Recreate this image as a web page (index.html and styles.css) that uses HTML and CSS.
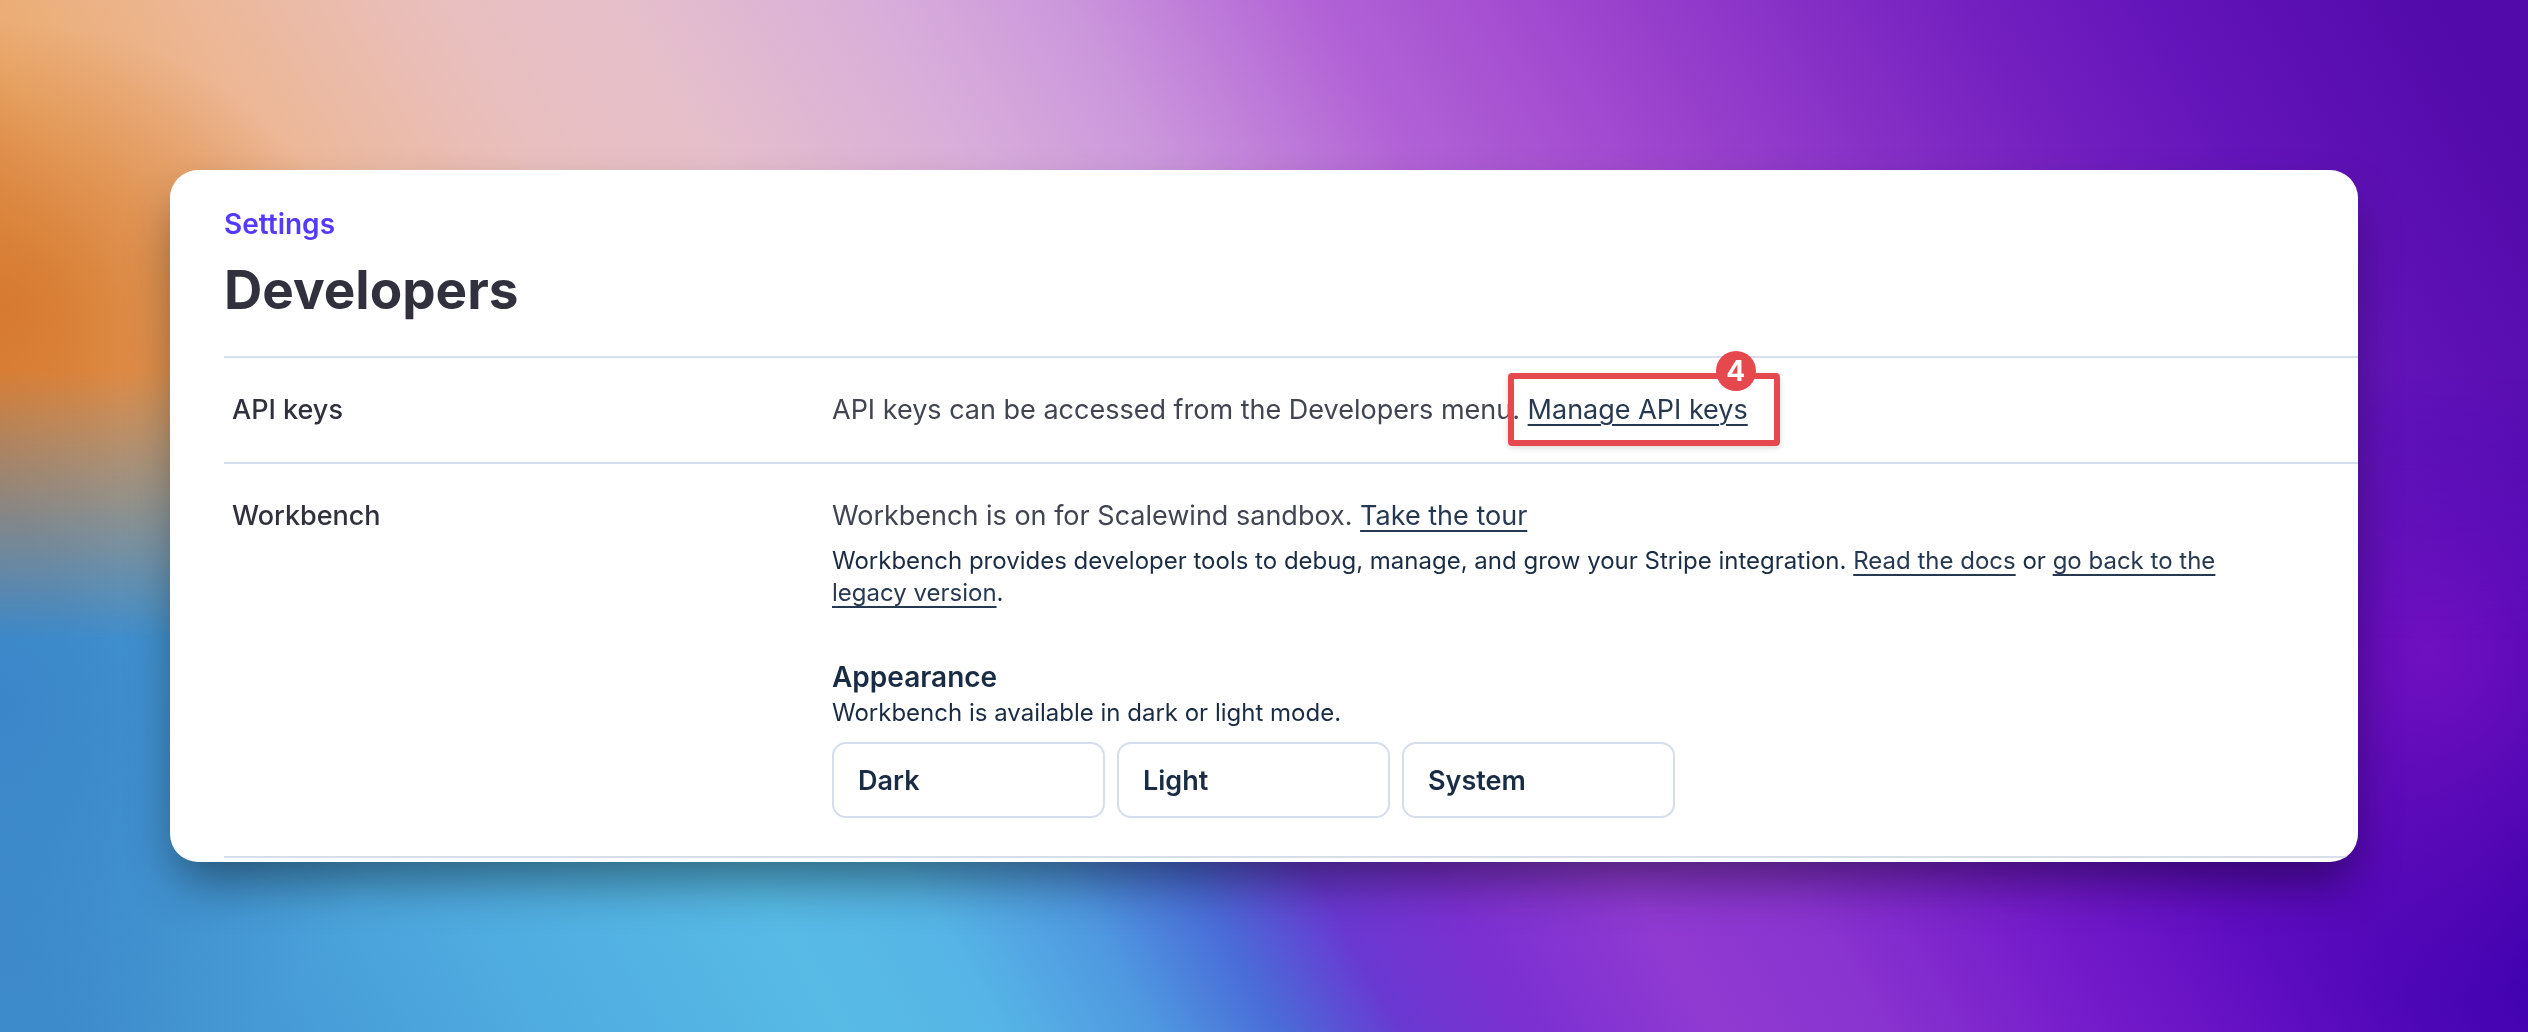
FILE: index.html
```html
<!DOCTYPE html>
<html lang="en">
<head>
  <meta charset="UTF-8" />
  <meta name="viewport" content="width=device-width, initial-scale=1.0" />
  <title>Developers</title>
  <link rel="stylesheet" href="styles.css">
</head>
<body>
  <main class="card">
    <header class="page-header">
      <a class="breadcrumb" href="#">Settings</a>
      <h1>Developers</h1>
    </header>

    <section class="row">
      <h2 class="row-label">API keys</h2>
      <div class="row-content">
        <p class="lead">API keys can be accessed from the Developers menu.
          <span class="callout"><a href="#">Manage API keys</a><span class="callout-box"><span class="callout-badge">4</span></span></span></p>
      </div>
    </section>

    <section class="row">
      <h2 class="row-label">Workbench</h2>
      <div class="row-content">
        <p class="lead">Workbench is on for Scalewind sandbox. <a href="#">Take the tour</a></p>
        <p class="note">Workbench provides developer tools to debug, manage, and grow your Stripe integration. <a href="#">Read the docs</a> or <a href="#">go back to the legacy version</a>.</p>

        <h3>Appearance</h3>
        <p class="note">Workbench is available in dark or light mode.</p>
        <div class="modes">
          <button type="button">Dark</button>
          <button type="button">Light</button>
          <button type="button">System</button>
        </div>
      </div>
    </section>
  </main>
</body>
</html>
```
FILE: styles.css
```css
* {
  box-sizing: border-box;
}

body {
  font-family: 'Inter', sans-serif;
  margin: 0;
  padding: 170px;
  min-height: 100vh;
  color: #30313d;
  background:
    radial-gradient(ellipse 12% 34% at 96% 63%, #7010c0 0%, rgba(112, 16, 192, 0) 100%),
    radial-gradient(ellipse 16% 40% at 0% 68%, #3b86c8 0%, rgba(59, 134, 200, 0) 100%),
    linear-gradient(60deg, #3f8ccc 2%, #469bd6 9%, #4fabe0 17%, #57bbe6 27%, #56b5e6 32%, #4f98e0 37%, #4a6cd8 41%, #6a38d2 45%, #7c30d2 49%, #903ad2 55%, #8a34d0 60%, #751ccb 67%, #610ec2 73%, #4c06b6 78%, #3d00ac 84%);
}

/* Warm upper half of the backdrop, fades into the blue one */
body::before {
  content: '';
  position: fixed;
  inset: 0;
  z-index: -1;
  background:
    radial-gradient(ellipse 14% 28% at 0% 30%, #d67a30 0%, rgba(214, 122, 48, 0) 100%),
    linear-gradient(60deg, #d67c34 10%, #e2924e 14%, #ebac70 18%, #edb795 25%, #e9bfbe 33%, #e6bfcb 39%, #d9aeda 47%, #cc98dc 53%, #b263d6 61%, #a24ad0 68%, #8b34c8 75%, #7420c0 82%, #6314ba 88%, #520aaa 97%);
  -webkit-mask-image: linear-gradient(to bottom, #000 36%, transparent 62%);
  mask-image: linear-gradient(to bottom, #000 36%, transparent 62%);
}

.card {
  background: #ffffff;
  border-radius: 28px;
  padding: 36px 0 4px 54px;
  overflow: hidden;
  box-shadow: 0 26px 50px -8px rgba(0, 0, 0, 0.45);
}

.page-header {
  padding-bottom: 33px;
}

.breadcrumb {
  font-size: 28px;
  line-height: 36px;
  font-weight: 600;
  color: #533afd;
  text-decoration: none;
}

h1 {
  margin: 15px 0 0;
  font-size: 53px;
  line-height: 66px;
  font-weight: 700;
  color: #30313d;
}

.row {
  display: flex;
  padding: 34px 0 34px 8px;
  border-top: 2px solid #d5dee9;
}

.row:last-child {
  padding-bottom: 38px;
  border-bottom: 2px solid #d5dee9;
}

.row-label {
  flex: 0 0 600px;
  margin: 0;
  font-size: 27px;
  line-height: 36px;
  font-weight: 500;
}

.row-content {
  flex: 1;
  max-width: 1400px;
}

p {
  margin: 0;
}

.lead {
  font-size: 27px;
  line-height: 36px;
  color: #414552;
}

.note {
  font-size: 24px;
  line-height: 32px;
  color: #1a2c44;
}

.lead + .note {
  margin-top: 11px;
}

.row-content a {
  color: #273951;
  text-decoration: underline;
  text-decoration-thickness: 2px;
  text-underline-offset: 5px;
}

h3 {
  margin: 50px 0 2px;
  font-size: 28px;
  line-height: 36px;
  font-weight: 600;
  color: #1a2c44;
}

.modes {
  display: flex;
  gap: 12px;
  margin-top: 13px;
}

.modes button {
  width: 273px;
  height: 76px;
  padding: 0 24px;
  font-family: inherit;
  font-size: 27px;
  font-weight: 600;
  text-align: left;
  color: #1a2c44;
  background: #ffffff;
  border: 2px solid #d5dee9;
  border-radius: 14px;
  cursor: pointer;
}

/* Step marker drawn around the link */
.callout {
  position: relative;
  white-space: nowrap;
}

.callout-box {
  position: absolute;
  top: -20px;
  left: -20px;
  right: -32px;
  bottom: -20px;
  border: 6px solid #e5484d;
  border-radius: 4px;
  box-shadow: 0 2px 6px rgba(0, 0, 0, 0.15);
  pointer-events: none;
}

.callout-badge {
  position: absolute;
  top: -28px;
  right: 18px;
  width: 40px;
  height: 40px;
  border-radius: 50%;
  background: #e5484d;
  color: #ffffff;
  font-size: 28px;
  line-height: 40px;
  font-weight: 700;
  text-align: center;
}
```
